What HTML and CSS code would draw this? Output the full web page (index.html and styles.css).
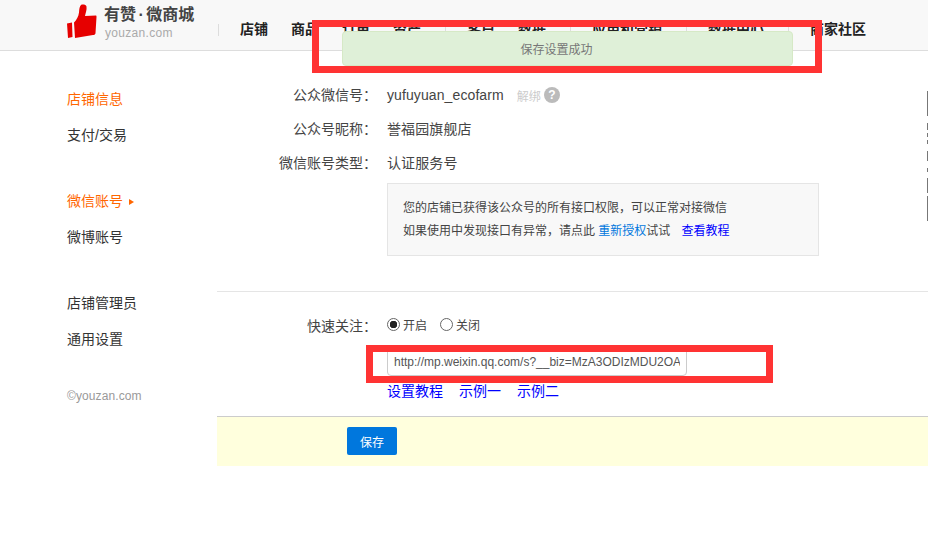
FILE: index.html
```html
<!DOCTYPE html>
<html lang="zh">
<head>
<meta charset="utf-8">
<title>有赞微商城</title>
<link rel="stylesheet" href="styles.css">
</head>
<body>
<header class="topbar">
  <a class="logo">
    <svg class="thumb" width="30" height="35" viewBox="0 0 30 35"><path d="M0 19.5 5 18.5 5.500 33 1 34Z M7 18.500C9.500 16 11.500 12.500 12 8.500 12.300 5 12.500 2.500 14 1 15.500 0 19 0.500 19.500 2.500 20 6 18.500 9 18 12L29 11.500C29.500 11.500 29.500 12.500 29.500 13L28.500 29C28.400 30.500 27.500 31 26 31L8 34Z" fill="#e60000"/></svg>
    <span class="logo-text">
      <span class="logo-title">有赞 · 微商城</span>
      <span class="logo-sub">youzan.com</span>
    </span>
  </a>
  <nav class="nav">
    <div class="nav-group"><a>店铺</a><a>商品</a><a>订单</a><a>资产</a></div>
    <div class="nav-group"><a>客户</a><a>数据</a></div>
    <div class="nav-group"><a>应用和营销</a></div>
    <div class="nav-group"><a>数据中心</a></div>
    <div class="nav-group"><a>商家社区</a></div>
  </nav>
</header>

<div class="layout">
  <aside class="side">
    <ul class="side-group">
      <li class="active">店铺信息</li>
      <li>支付/交易</li>
    </ul>
    <ul class="side-group">
      <li class="active">微信账号<i class="caret"></i></li>
      <li>微博账号</li>
    </ul>
    <ul class="side-group">
      <li>店铺管理员</li>
      <li>通用设置</li>
    </ul>
    <p class="copy">©youzan.com</p>
  </aside>

  <main class="main">
    <section class="info">
      <div class="row"><span class="label">公众微信号：</span><span class="value">yufuyuan_ecofarm</span><span class="unbind">解绑</span><span class="help">?</span></div>
      <div class="row"><span class="label">公众号昵称：</span><span class="value">誉福园旗舰店</span></div>
      <div class="row"><span class="label">微信账号类型：</span><span class="value">认证服务号</span></div>
      <div class="notice">
        <p>您的店铺已获得该公众号的所有接口权限，可以正常对接微信</p>
        <p>如果使用中发现接口有异常，请点此 <a class="link-soft">重新授权</a>试试<a class="link-pure tutorial">查看教程</a></p>
      </div>
    </section>

    <section class="follow">
      <div class="row"><span class="label">快速关注：</span>
        <label class="radio"><i class="dot on"></i>开启</label>
        <label class="radio"><i class="dot"></i>关闭</label>
      </div>
      <div class="url-line"><input class="url" type="text" value="http://mp.weixin.qq.com/s?__biz=MzA3ODIzMDU2OA"></div>
      <div class="links"><a>设置教程</a><a>示例一</a><a>示例二</a></div>
    </section>

    <footer class="actions"><button class="save" type="button">保存</button></footer>
  </main>
</div>

<div class="toast">保存设置成功</div>
<div class="mark mark-toast"></div>
<div class="mark mark-url"></div>
<svg class="edge" width="1" height="131" viewBox="0 0 1 131"><path d="M.5 0V25M.5 32V39M.5 42V46M.5 49V53M.5 60V70M.5 77V81M.5 87V102M.5 105V130" stroke="#777"/></svg>
</body>
</html>
```

FILE: styles.css
```css
* { box-sizing: border-box; }
html, body { margin: 0; padding: 0; height: 100%; overflow: hidden; background: #fff; }
body {
  font-family: "Liberation Sans", "Noto Sans CJK SC", sans-serif;
  font-size: 14px;
  color: #333;
  position: relative;
}
ul { list-style: none; margin: 0; padding: 0; }
p { margin: 0; }

.topbar {
  height: 51px;
  background: #f8f8f8;
  border-bottom: 1px solid #ddd;
  display: flex;
  align-items: flex-start;
  padding-left: 67px;
}
.logo { display: flex; width: 151px; padding-top: 3px; }
.thumb { display: block; margin-top: 1px; }
.logo-text { display: flex; flex-direction: column; margin-left: 7px; }
.logo-title { font-size: 16px; font-weight: 700; line-height: 20px; margin-top: 2px; color: #444; white-space: nowrap; word-spacing: -2px; }
.logo-sub { font-size: 12px; line-height: 14px; margin-top: 1px; margin-left: 1px; color: #aaa; letter-spacing: .3px; }

.nav { display: flex; padding-top: 24px; }
.nav-group {
  display: flex;
  gap: 23px;
  height: 12px;
  align-items: center;
  padding: 0 24px 0 21px;
  border-left: 1px solid #ddd;
}
.nav-group a { font-size: 14px; font-weight: 700; color: #222; line-height: 12px; padding-bottom: 2px; white-space: nowrap; }

.layout { display: flex; align-items: flex-start; }
.side { width: 217px; padding: 30px 0 0 67px; flex: none; }
.side-group { margin-bottom: 30px; }
.side-group li { height: 36px; line-height: 36px; font-size: 14px; color: #333; }
.side-group li.active { color: #f60; }
.caret {
  display: inline-block;
  width: 0; height: 0;
  margin-left: 6px;
  vertical-align: 1px;
  border-left: 5px solid #f60;
  border-top: 3.500px solid transparent;
  border-bottom: 3.500px solid transparent;
}
.copy { font-size: 12px; color: #999; margin-top: 32px; line-height: 14px; letter-spacing: .1px; }

.main { flex: 1; min-width: 0; padding-top: 27px; }
.info { height: 214px; border-bottom: 1px solid #e5e5e5; }
.row { display: flex; align-items: center; height: 34px; }
.label { width: 160px; margin-right: 10px; text-align: right; font-size: 14px; line-height: 20px; color: #444; white-space: nowrap; flex: none; }
.value { font-size: 14px; line-height: 20px; color: #444; letter-spacing: .1px; }
.unbind { font-size: 12px; color: #ccc; margin-left: 13px; }
.help {
  width: 16px; height: 16px;
  margin-left: 3px;
  border-radius: 50%;
  background: #bbb;
  color: #fff;
  font-size: 12px;
  font-weight: 700;
  line-height: 16px;
  text-align: center;
}
.notice {
  width: 432px;
  height: 73px;
  margin: 3px 0 0 170px;
  padding: 13px 15px 0;
  background: #f8f8f8;
  border: 1px solid #e5e5e5;
  font-size: 12px;
  line-height: 23px;
  color: #444;
}
.link-soft { color: #07d; }
.link-pure { color: #00f; }
.tutorial { margin-left: 11px; }

.follow { height: 124px; padding-top: 17px; }
.radio { display: flex; align-items: center; font-size: 12px; color: #444; margin-right: 13px; padding-bottom: 4px; }
.dot {
  width: 13px; height: 13px;
  margin-right: 3px;
  border: 1px solid #666;
  border-radius: 50%;
  background: #fff;
  flex: none;
}
.dot.on { background: radial-gradient(circle, #222 0 3.500px, #fff 4px); }
.url-line { padding: 5px 0 0 170px; }
.url {
  display: block;
  width: 300px;
  height: 28px;
  padding: 0 6px;
  border: 1px solid #ccc;
  border-radius: 4px;
  background: #fff;
  font: 12px "Liberation Sans", sans-serif;
  color: #555;
}
.links { display: flex; gap: 16px; padding: 5px 0 0 170px; font-size: 14px; line-height: 20px; color: #00f; }

.actions {
  height: 50px;
  background: #ffd;
  border-top: 1px solid #ccc;
  padding: 10px 0 0 130px;
}
.save {
  display: block;
  width: 50px;
  height: 28px;
  padding: 0;
  border: 0;
  border-radius: 2px;
  background: #07d;
  color: #fff;
  font: 12px "Liberation Sans", "Noto Sans CJK SC", sans-serif;
}

.toast {
  position: absolute;
  left: 342px; top: 31px;
  width: 451px; height: 35px;
  padding-right: 22px;
  background: #dff0d8;
  border: 1px solid #d6e9c6;
  border-radius: 4px;
  font-size: 12px;
  line-height: 36px;
  text-align: center;
  color: #777;
}
.mark { position: absolute; border: 7px solid #f33; }
.mark-toast { left: 312px; top: 20px; width: 510px; height: 53px; }
.mark-url { left: 366px; top: 345px; width: 407px; height: 38px; }
.edge { position: absolute; left: 927px; top: 91px; }
```
